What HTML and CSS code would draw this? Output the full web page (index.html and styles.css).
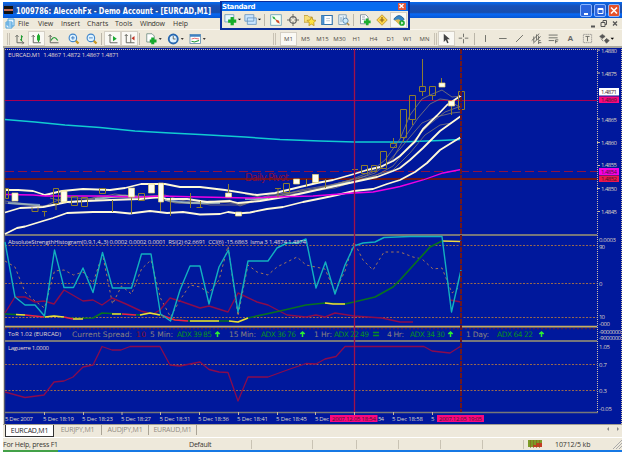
FILE: index.html
```html
<!DOCTYPE html>
<html lang="en">
<head>
<meta charset="utf-8">
<title>1009786: AleccohFx - Demo Account - [EURCAD,M1]</title>
<link rel="stylesheet" href="styles.css">
</head>
<body>
<div class="window">
  <header class="titlebar">
    <span class="app-icon"></span>
    <span class="title"><svg width="199" height="15"><text x="0" y="11" textLength="195" lengthAdjust="spacingAndGlyphs">1009786: AleccohFx - Demo Account - [EURCAD,M1]</text></svg></span>
    <span class="winbtn"><svg width="11" height="12"><path d="M3 9h4" stroke="#fff" stroke-width="2"/></svg></span>
    <span class="winbtn"><svg width="11" height="12"><path d="M3 3.500h5v5H3zM3 4.500h5" fill="none" stroke="#fff"/></svg></span>
    <span class="winbtn close"><svg width="11" height="12"><path d="M2 2.500l6 6m0-6l-6 6" stroke="#fff" stroke-width="1.600"/></svg></span>
  </header>
  <nav class="menubar">
    <svg class="doc-icon" width="10" height="11"><path d="M3 1h6v7H3zM1 4h6v6H1zM1 6h6" fill="#e6f5ff" stroke="#4aa0dc"/></svg>
    <span class="m1">File</span><span class="m2">View</span><span class="m3">Insert</span><span class="m4">Charts</span><span class="m5">Tools</span><span class="m6">Window</span><span class="m7">Help</span>
    <svg class="mdi" width="34" height="11"><g fill="none" stroke="#555"><path d="M3 8.500h4" stroke-width="2"/><path d="M13 4.500h4v4h-4zM15 4V2.500h3.500v4H17"/><path d="M25 3.500l4 4m0-4l-4 4" stroke-width="1.300"/></g></svg>
  </nav>
  <div class="toolbar">
    <i class="grip g1"></i>
    <span class="tool"><svg viewBox="0 0 16 16"><path d="M4 3v10h9M2 5l2-2 2 2M11 11l2 2-2 2" class="ink"/><path d="M10 3v8M8 9h2m0-4h2" class="green"/></svg></span>
    <span class="tool on"><svg viewBox="0 0 16 16"><path d="M3 3v10h10M1 5l2-2 2 2" class="ink"/><path d="M10 1v11" class="green"/><rect x="8" y="3" width="4" height="7" fill="#20b030"/></svg></span>
    <span class="tool"><svg viewBox="0 0 16 16"><path d="M3 3v10h11M1 5l2-2 2 2" class="ink"/><path d="M4 10q4-8 9 0" class="green"/></svg></span>
    <span class="tool wide zin"><svg viewBox="0 0 16 16"><path d="M10 10l4 4" stroke="#c99822" stroke-width="3"/><circle cx="6.500" cy="6.500" r="5" fill="#dff3ff" stroke="#3f86cc" stroke-width="1.500"/><path d="M4 6.500h5M6.500 4v5" stroke="#2467b5"/></svg></span>
    <span class="tool"><svg viewBox="0 0 16 16"><path d="M10 10l4 4" stroke="#c99822" stroke-width="3"/><circle cx="6.500" cy="6.500" r="5" fill="#dff3ff" stroke="#3f86cc" stroke-width="1.500"/><path d="M4 6.500h5" stroke="#2467b5"/></svg></span>
    <i class="sep"></i>
    <span class="tool on"><svg viewBox="0 0 16 16"><path d="M4 2v11h10M2 4l2-2 2 2" class="ink"/><path d="M8 4l5 3.500-5 3.500z" fill="#19a832"/></svg></span>
    <span class="tool on"><svg viewBox="0 0 16 16"><path d="M3 2v11h11M9 2v11M1 4l2-2 2 2" class="ink"/><path d="M14 4l-4 3 4 3z" fill="#c23020"/></svg></span>
    <i class="sep"></i>
    <span class="tool drop"><svg viewBox="0 0 22 16"><path d="M2 1h7l3 3v8H2z" fill="#fff" stroke="#628378"/><path d="M10 6v9M6 10.500h9" stroke="#15a82c" stroke-width="4"/><path d="M18 7h4l-2 2z"/></svg></span>
    <span class="tool drop"><svg viewBox="0 0 22 16"><circle cx="8" cy="8" r="6" fill="#dff2ff" stroke="#2868b0" stroke-width="2.500"/><path d="M8 4v4h3" class="ink"/><path d="M18 7h4l-2 2z"/></svg></span>
    <span class="tool drop"><svg viewBox="0 0 22 16"><rect x="1" y="2" width="14" height="12" fill="#fff" stroke="#5383ab"/><path d="M1 3.500h14" stroke="#4182c2" stroke-width="3"/><path d="M3 8l4-1 6 1" stroke="#d44" fill="none"/><path d="M3 11l4 1 6-2" class="green"/><path d="M18 7h4l-2 2z"/></svg></span>
    <i class="grip g2"></i>
    <span class="tf on">M1</span><span class="tf">M5</span><span class="tf">M15</span><span class="tf">M30</span><span class="tf">H1</span><span class="tf">H4</span><span class="tf">D1</span><span class="tf">W1</span><span class="tf">MN</span>
    <i class="grip g3"></i>
    <span class="draw on"><svg viewBox="0 0 16 16"><path d="M4 1v12l3-3 2 5 2-1-2-5h4z" fill="#444"/></svg></span>
    <span class="draw"><svg viewBox="0 0 16 16"><path d="M8 1v5m0 3v6M1 7.500h5m4 0h5" class="ink"/></svg></span>
    <i class="sep s2"></i>
    <span class="draw"><svg viewBox="0 0 16 16"><path d="M8 3v10" class="ink"/></svg></span>
    <span class="draw"><svg viewBox="0 0 16 16"><path d="M3 8h11" class="ink"/></svg></span>
    <span class="draw"><svg viewBox="0 0 16 16"><path d="M3 13L13 3" class="ink"/></svg></span>
    <span class="draw"><svg viewBox="0 0 16 16"><path d="M1 11L12 1M3 15L14 5M4 5v8M8 2v8M11 4v6M11 14h4m-4-3h3m-3 0v5" class="ink"/></svg></span>
    <span class="draw"><svg viewBox="0 0 16 16"><path d="M1 3h13M1 7h13M1 11h8M11 10v5m0-5h4m-4 2.500h3" class="ink"/></svg></span>
    <span class="draw letter">A</span>
    <span class="draw"><svg viewBox="0 0 16 16"><rect x="2" y="2" width="12" height="12" fill="none" stroke="#777" stroke-dasharray="2 1"/><path d="M5 5h6M8 5v7" class="ink"/></svg></span>
    <span class="draw last"><svg viewBox="0 0 22 16"><path d="M1 5l4-3 4 3-4 3zM8 11l3-3 4 3-4 4zM3 8l3 4" fill="#555" stroke="#555"/><path d="M17 7h5l-2.500 3z"/></svg></span>
  </div>

  <main class="chart">
  <svg width="619" height="376" viewBox="3 48 619 376">
    <rect x="3" y="48" width="619" height="376" fill="#00189c"/>
    <path d="M3.500 48v376" stroke="#dcd8ca"/><path d="M4.700 48v376" stroke="#666"/>
    <path d="M5 49.500H598M597.500 49V412M621.500 49V424" stroke="#d0bfa4" stroke-dasharray="1 1" fill="none"/>
    <path d="M5 235H597M5 341H597" stroke="#77777b" stroke-width="2.200"/>
    <path d="M5 412.500H598" stroke="#777" stroke-width="1.300"/>

    <g fill="none">
      <path d="M5 100.500H597" stroke="#a80052"/>
      <path d="M5 171.500H597" stroke="#8d1242" stroke-width="1.200" stroke-dasharray="9 4"/>
      <path d="M5 179H597" stroke="#6a1519" stroke-width="2"/>
      <path d="M5 119.500L35 122 65 125 100 127.500 135 131 170 133 200 134.500 245 137 280 139.500 320 141 355 142H400L440 140.500 461 139.500" class="cyan"/>
      <g class="ribbon">
        <path d="M5 201L25 204 45 207 60 203 85 200 100 196 130 198 155 196 170 202 200 203 230 200 240 206 265 197 300 193 330 187 355 181 375 176 393 166 405 151 418 136 430 124 445 112 461 106"/>
        <path d="M5 203L25 205 45 206 65 197 90 199 115 194 145 198 160 197 175 203 205 204 230 202 240 204 270 195 310 190 340 183 365 176 385 165 400 149 410 137 422 123 436 117 452 113 461 112"/>
        <path d="M50 198L70 203 100 198 150 196 165 195 180 200 210 205 240 205 265 199 290 193 325 187 350 180 370 172 385 160 400 139 410 115 422 99 430 95 442 90 452 97 461 96"/>
        <path d="M95 200L125 195 155 198 180 203 210 201 240 204 270 199 305 192 335 188 365 178 393 170 410 153 425 135 440 125 452 123"/>
        <path d="M245 194L270 199 300 190 330 185 357 179 375 173 392 160 405 137 418 118 430 104 440 99 448 100 461 108"/>
      </g>
      <path d="M95 199L120 196 145 197M165 200L190 203 220 203M245 199L268 199M325 188L350 182M8 203L40 205" stroke="#b8d9d3" stroke-width="2" opacity=".65"/>
      <g class="cream">
        <path d="M5 190H18L33 191 45 195 62 191 83 189 110 190 125 188 141 184H165L180 187 200 187 225 190 257 195 275 193 300 187 317 183 333 180 354 174 367 170 380 167 393 161 400 156 415 141.500 423 129 437 115.500 447 105 461 95.500"/>
        <path d="M5 212.500L20 208 43 207 53 205 67 202 87 201 110 200 140 199 160 197 167 199 187 199 207 202 230 201 238 203 260 201 290 196 317 190 354 182 377 177 393 171 400 168 410 160 423 148 440 131 461 116"/>
        <path d="M5 234L17 228 25 226.500 43 221 53 218 67 213 93 212 115 212 130 213.500 150 211 167 213 183 212 200 214.500 220 214 228 212 238 213.500 250 212.500 267 209 283 207 303 202 323 198 337 195 354 191 373 189 387 184 400 180 415 172 427 163 440 150 461 137"/>
      </g>
      <path d="M5 194.500L33 195 45 196H100L140 197 160 196 200 197 250 198 273 197 313 196 354 193 373 192 393 188 400 186.500 423 180 443 173 461 169.500" stroke="#ef00e5" stroke-width="1.300"/>
      <path d="M53.500 188.500h5v15h-5zM71.500 196.500h6v9h-6zM81.500 197.500h6v9h-6zM99.500 188.500h6v5h-6zM138.500 193.500h6v7h-6zM283.500 183.500h6v9h-6zM361.500 165.500h6v8h-6zM371.500 165.500h5v6h-5zM380.500 151.500h6v17h-6zM390.500 143.500h6v4h-6zM400.500 109.500h6v28h-6zM409.500 95.500h6v24h-6zM419.500 86.500h6v5h-6zM429.500 86.500h6v9h-6zM458.500 91.500h6v18h-6zM5.500 188.500h3v10h-3zM32 207.500v4h6v-4M56 203v7M42 211.500h5m-2.500 0v5M112.500 200v12M131.500 197v17M160.500 200v11M170.500 198v18M190.500 193v15M200.500 201v7M196.500 207.500h6M228.500 184v9M275 188.500h6m-3 0v9M306.500 179v8M325.500 179v9M352 169.500h6M412.500 120v5M422.500 59v28m0 4v5M432.500 96v4M441.500 78v5M451.500 106v9M393.500 138v5M403.500 138v4" stroke="#8c7d31"/>
      <path d="M12 193h6v8h-6zM61 191h6v11h-6zM128.500 188h6v9h-6zM148.500 184h6v9h-6zM158.500 183h5v19h-5zM225.500 193h6v4h-6zM235.500 212h6v4h-6zM293.500 179h6v5h-6zM312.500 174.500h6v8h-6zM439 83h6v4h-6zM448.500 101h6v5h-6z" fill="#fffef0" stroke="#e7d56c" stroke-width=".7"/>
    </g>
    <text x="245" y="180.500" textLength="44" class="pivot">Daily Pivot</text>

    <g fill="none" stroke="#99684d" stroke-dasharray="2 1.500">
      <path d="M5 245.500H597M5 283.500H597M5 317.500H597M5 364.500H597M5 390.500H597"/>
    </g>
    <path d="M5 326.700H597" stroke="#c7ae60" stroke-width="1.700"/><path d="M5 328.700H597" stroke="#731d20" stroke-dasharray="2 2"/>
    <g fill="none" stroke-linejoin="round">
      <path d="M5 261L15 267 25 292 35 301 44.500 308 54.500 271 64 270 73.500 275 83 272 93 283 102.500 254 112.500 304 121.500 286 131.500 294 141.500 269 151 260 160.500 298 170.500 317 180 300 190 285 200 287 209 293 219 280 228 246 238 316 248 265 257 272 268 275 277 267 297 257 306 265 325 269 335 292 345 271 354 242 363 260 373 270 384 252 400 252 413 257 422 259 433 269 442 268 452 293 461 286" stroke="#a37659" stroke-dasharray="2.500 3"/>
      <path d="M5 313L15 297 25 297 35 302 44 301 54 304 64 290 83 301 93 300 102 305 112 298 126 304 141 311 153 314 160 310 170 298 180 301 200 308 209 306 228 312 238 293 257 302 268 305 287 315 306 317 316 315 325 317 335 313 354 316 382 318 400 322H413M450 300L461 302" stroke="#8d0c4a" stroke-width="1.400"/>
      <path d="M5 314L25 315 44 317 54 316 75 318.500 93 318 102 313 120 314 140 315 150 313 160 315 175 320 190 321 228 321 238 322 248 318 280 311 306 305 325 303 345 304 354 302 375 297 393 287 400 280 420 258 430 247 442 241" stroke="#08721e" stroke-width="1.700"/>
      <path d="M16 314.500L25 315M45 317L54 316 64 317M73 319H83M112 314H121M140 315L150 313 160 315M190 321H219M229 321L238 322 248 318M325 303L333 304H345M442 241L461 241.500" stroke="#efd941" stroke-width="1.700"/>
      <path d="M25 315L44 317M64 317L73 319M122 314L136 315M161 315L175 320 188 321" stroke="#ee194d" stroke-width="1.600"/>
      <path d="M5 242L15 297 25 305 35 305 44.500 316 54.500 250 64 287.500H73.500L83 268 93 292.500 102.500 252.500 112.500 288H131.500L141.500 254H151L160.500 314 170.500 321 180 290 190 266H200L209 304 219 267 228.500 250 238 312 248 261H268L277 248 287 243H297L306 239 316 288 325.500 262 335 294 345 265 354 246 363 243 375 242 384 237.500 410 236.500H442L451.500 312 461 270" stroke="#12b0bf" stroke-width="1.400"/>
      <path d="M5 392L25 397.500 44 395 54 382 64 381 73 377 83 367 93 365 102 346.500 112 350H121L130 346.500H160L170 365 180 366 190 364 200 362 209 369.500 219 372 228 372.500 238 401 248 377H268L290 369 306 363.500 316 364 325 359 336 356.500 345 346.500H424L432 351 450 353 461 346" stroke="#8b0b4c" stroke-width="1.300"/>
      <path d="M354.500 49V412" stroke="#a0114b" stroke-width="1.300"/>
      <path d="M461 49V412" stroke="#6b1720" stroke-width="2" stroke-dasharray="5 1"/>
    </g>

    <g class="note">
      <text x="8" y="56.500" textLength="111">EURCAD,M1  1.4867 1.4872 1.4867 1.4871</text>
      <text x="8" y="244" textLength="298">AbsoluteStrengthHistogram(0,9,1,4,,3) 0.0002 0.0002 0.0001  RSI(2) 62.6691  CCI(6) -15.6863  lsma 3 1.4874 1.4874</text>
      <text x="8" y="336" textLength="53">ToR 1.02 (EURCAD)</text>
      <text x="8" y="350" textLength="41">Laguerre 1.0000</text>
    </g>
    <g class="tor">
      <g fill="#8b8380"><text x="72" y="336.500" textLength="60">Current Spread:</text><text x="150" y="336.500" textLength="23">5 Min:</text><text x="229" y="336.500" textLength="27">15 Min:</text><text x="314" y="336.500" textLength="18">1 Hr:</text><text x="387" y="336.500" textLength="17">4 Hr:</text><text x="466" y="336.500" textLength="23">1 Day:</text></g>
      <text x="136" y="336.500" textLength="10" fill="#8f1127">10</text>
      <g fill="#089022"><text x="177" y="336.500" textLength="35">ADX 39 85</text><text x="261" y="336.500" textLength="35">ADX 36 76</text><text x="334" y="336.500" textLength="35">ADX 22 49</text><text x="410" y="336.500" textLength="35">ADX 34 30</text><text x="497" y="336.500" textLength="36">ADX 64 22</text></g>
      <path d="M217.500 337v-5m-2.200 2l2.200-2 2.200 2M302.500 337v-5m-2.200 2l2.200-2 2.200 2M450.500 337v-5m-2.200 2l2.200-2 2.200 2M541.500 337v-5m-2.200 2l2.200-2 2.200 2" fill="none" stroke="#2cee32" stroke-width="1.500"/>
      <path d="M373 332.500h6M373 335.500h6" stroke="#089022" stroke-width="1.400"/>
    </g>

    <path d="M597 50h3M597 73h3M597 119h3M597 142.500h3M597 165.500h3M597 188.500h3M597 211.500h3M44.500 412v3M83.500 412v3M122 412v3M160.500 412v3M199.500 412v3M238.500 412v3M277.500 412v3M315.500 412v3M354.500 412v3M393.500 412v3M432.500 412v3" stroke="#c5b79e"/>
    <g class="scale">
      <text x="601" y="52.500" textLength="16">1.4880</text><text x="601" y="75.500" textLength="16">1.4875</text><text x="601" y="121.500" textLength="16">1.4865</text><text x="601" y="144.500" textLength="16">1.4860</text><text x="601" y="167" textLength="16">1.4855</text><text x="601" y="190.500" textLength="16">1.4850</text><text x="601" y="213.500" textLength="16">1.4845</text>
      <text x="599" y="242" textLength="17">0.0003</text><text x="599" y="248.500" textLength="6">90</text><text x="599" y="286">0</text><text x="599" y="319" textLength="6">10</text><text x="599" y="325.500" textLength="11">-000</text>
      <text x="599" y="333.500" textLength="22">-9000000</text><text x="599" y="340" textLength="22">-9000000</text><text x="599" y="349" textLength="11">1.05</text><text x="599" y="367" textLength="8">0.7</text><text x="599" y="393" textLength="8">0.3</text><text x="599" y="411" textLength="13">-0.05</text>
    </g>
    <rect x="599" y="88" width="20" height="7.500" fill="#fff"/><rect x="599" y="96.500" width="20" height="6.500" fill="#fa087e"/><rect x="599" y="168" width="20" height="7" fill="#f500e4"/><rect x="599" y="175.500" width="20" height="6.500" fill="#ed164e"/>
    <g class="tag"><text x="601" y="94" textLength="16">1.4871</text><text x="601" y="102" textLength="16">1.4869</text><text x="601" y="173.500" textLength="16">1.4854</text><text x="601" y="181" textLength="16">1.4852</text></g>
    <g class="scale">
      <text x="5" y="421" textLength="28">5 Dec 2007</text><text x="43" y="421" textLength="31">5 Dec 18:19</text><text x="82" y="421" textLength="31">5 Dec 18:23</text><text x="121" y="421" textLength="30">5 Dec 18:27</text><text x="159.500" y="421" textLength="31">5 Dec 18:31</text><text x="198" y="421" textLength="31">5 Dec 18:36</text><text x="237" y="421" textLength="31">5 Dec 18:41</text><text x="276" y="421" textLength="31">5 Dec 18:45</text><text x="315" y="421" textLength="14">5 Dec</text><text x="378" y="421" textLength="6">54</text><text x="392" y="421" textLength="31">5 Dec 18:58</text><text x="431" y="421">5</text>
    </g>
    <rect x="330" y="415" width="47.500" height="7" fill="#fa087e"/><rect x="437" y="415" width="47" height="7" fill="#fa087e"/>
    <g class="tag"><text x="332" y="421" textLength="44">2007.12.05 18:54</text><text x="439" y="421" textLength="43">2007.12.05 19:05</text></g>
  </svg>
  </main>

  <div class="tabs"><span class="tab active">EURCAD,M1</span><span class="tab">EURJPY,M1</span><span class="tab">AUDJPY,M1</span><span class="tab">EURAUD,M1</span><span class="arrows"><svg width="18" height="8"><path d="M5 2v4L3 4zM13 2v4l2-2z" fill="#888"/></svg></span></div>
  <footer class="status"><span class="help">For Help, press F1</span><span class="profile">Default</span><i></i><i></i><i></i><i></i><i></i><i></i><i></i><span class="traffic"><svg width="15" height="8"><path d="M0 0h14v7H0z" fill="#7d9a28"/><path d="M5 7V5h3V3h6v4z" fill="#c43d24"/><path d="M2.500 0v8M5.500 0v8M8.500 0v8M11.500 0v8" stroke="#8a5a20" stroke-width=".6"/></svg></span><span class="kb">10712/5 kb</span><svg class="resize" width="10" height="10"><path d="M1 10l9-9M4 10l6-6M7 10l3-3" stroke="#aaa"/></svg></footer>
  <div class="taskbar"><span></span></div>

  <aside class="floating">
    <div class="float-head"><span>Standard</span><b><svg width="7" height="6"><path d="M1.500 1l4 4m0-4l-4 4" stroke="#fff" stroke-width="1.300"/></svg></b></div>
    <div class="float-tools">
      <span class="f wide"><svg viewBox="0 0 22 16"><path d="M1 2h11v9H1z" fill="#e8f5ff" stroke="#6898bd"/><path d="M10 5v10M5 10h10" stroke="#17ad29" stroke-width="4"/><path d="M17 7h4l-2 2z"/></svg></span>
      <span class="f wide"><svg viewBox="0 0 22 16"><path d="M1 2h11v8H1zM4 6h11v8H4z" fill="#c9e5ff" stroke="#6593be"/><path d="M17 7h4l-2 2z"/></svg></span>
      <i class="sep"></i>
      <span class="f"><svg viewBox="0 0 16 16"><rect x="1" y="1" width="14" height="14" fill="#f5fff5" stroke="#5796b5"/><path d="M3 3l3 1 2 4-4-2z" fill="#2daf43"/><path d="M7 7l5 2 1 4-4-2z" fill="#d34d2c"/></svg></span>
      <span class="f"><svg viewBox="0 0 16 16"><circle cx="8" cy="8" r="4.500" fill="none" stroke="#666" stroke-width="1.500"/><path d="M8 0v6m0 4v6M0 8h6m4 0h6" class="ink"/></svg></span>
      <span class="f"><svg viewBox="0 0 16 16"><path d="M0 2h5l2 2h4v7H0z" fill="#f8df77" stroke="#bb9430"/><path d="M10 4l2 4 4 .5-3 3 .5 4-3.500-2-3.500 2 .5-4-3-3 4-.5z" fill="#ffe23e" stroke="#b78c20"/></svg></span>
      <span class="f"><svg viewBox="0 0 16 16"><path d="M1 2h14v12H1z" fill="#fff" stroke="#2e71ac" stroke-width="1.500"/><path d="M3 2v12" stroke="#3e88cb" stroke-width="3"/><path d="M7 6h5M7 9h5" stroke="#abc"/></svg></span>
      <span class="f"><svg viewBox="0 0 16 16"><path d="M1 1h10v13H1zM4 4v7m3-8v8" fill="#e8f4fb" stroke="#678dac"/><circle cx="10" cy="9" r="3.500" fill="#cae9fb" stroke="#4478a8"/><path d="M12 12l3 3" stroke="#a88644" stroke-width="2"/></svg></span>
      <i class="sep s3"></i>
      <span class="f"><svg viewBox="0 0 16 16"><path d="M2 1h7l3 3v9H2z" fill="#fff" stroke="#678"/><path d="M4 4h4M4 7h5" stroke="#789"/><path d="M11 6v9M6.500 10.500h9" stroke="#1eae30" stroke-width="3.500"/></svg></span>
      <span class="f"><svg viewBox="0 0 16 16"><path d="M8 1l7 7-7 7-7-7z" fill="#ffd64b" stroke="#b18624"/><path d="M8 4v7M5 8h6" stroke="#8b6115" stroke-width="1.500"/></svg></span>
      <span class="f on"><svg viewBox="0 0 16 16"><path d="M1 7q7-10 14 0l-7 5z" fill="#3585c6" stroke="#1e5b91"/><path d="M2 8l6 6 5-2-5-5z" fill="#e0bb53"/><circle cx="12" cy="12" r="3.800" fill="#1ea92d"/><path d="M11 10l3 2-3 2z" fill="#fff"/></svg></span>
    </div>
  </aside>
</div>
</body>
</html>
```

FILE: styles.css
```css
* { box-sizing: border-box; }
body { margin: 0; background: #fff; font: 7px/1 "Open Sans", "DejaVu Sans", sans-serif; color: #373530; overflow: hidden; }
svg { display: block; flex: none; }
.window { position: relative; width: 619px; height: 450px; margin: 2px 0 0 3px; background: #eee9db; display: flex; flex-direction: column; }
.titlebar { height: 16px; flex: none; display: flex; align-items: center; gap: 3px; padding-right: 2px; background: linear-gradient(#086cf0, #1851b8 25%, #174eae 65%, #0869f5 75%, #0757d2); }
.app-icon { width: 9px; height: 8px; background: linear-gradient(#111 35%, #c66b55 35% 58%, #111 58%); margin-left: 1px; }
.title { flex: none; margin-right: auto; }
.title svg { overflow: visible; }
.title text { font: bold 8.5px "DejaVu Sans Condensed", "DejaVu Sans", sans-serif; font-stretch: condensed; fill: #fff; }
.winbtn { width: 12px; height: 13px; border: 1px solid #8bb6ff; border-radius: 2px; background: #2b65dd; margin-right: -1px; }
.winbtn.close { background: #e4512b; margin: 0; }
.menubar { height: 12px; flex: none; display: flex; align-items: center; border-bottom: 1px solid #f9f6ed; }
.doc-icon { margin-left: 2px; width: 13px; }
.menubar span { white-space: nowrap; }
.m1 { width: 20px; } .m2 { width: 23px; } .m3 { width: 26px; } .m4 { width: 28px; } .m5 { width: 25px; } .m6 { width: 33px; letter-spacing: -.3px; } .m7 { width: 20px; }
.mdi { margin-left: auto; }
.toolbar { height: 18px; flex: none; display: flex; align-items: center; border-bottom: 2px solid #aaa79e; padding: 1px 2px 0 4px; }
.toolbar svg { height: 12px; width: 12px; }
.ink { fill: none; stroke: #666762; stroke-width: 1.3; }
.green { fill: none; stroke: #219a35; stroke-width: 1.5; }
.grip { width: 3px; height: 12px; border-left: 1px solid #c8c2b4; border-right: 1px solid #c8c2b4; flex: none; }
.g1 { margin-right: 1px; }
.g2 { margin: 0 4px 0 65px; }
.g3 { margin: 0 1px; }
.sep { width: 2px; height: 12px; border-left: 1px solid #bbb6a9; margin: 0 1px; flex: none; }
.tool { width: 17px; height: 15px; display: grid; place-items: center; flex: none; }
.tool.wide { width: 18px; }
.tool.zin { margin-left: 3px; }
.tool.drop { width: 22px; }
.toolbar .drop svg { width: 17px; }
.on { background: #faf9f4; border: 1px solid #d5d0c5; }
.tf { width: 17px; height: 14px; display: grid; place-items: center; font-size: 6px; flex: none; color: #4d4b45; }
.draw { width: 17px; height: 15px; display: grid; place-items: center; flex: none; }
.toolbar .draw svg { width: 11px; height: 11px; }
.letter { font: bold 8px "Liberation Sans", sans-serif; color: #666; }
.s2 { margin: 0 1px 0 2px; }
.draw.last { width: 20px; }
.toolbar .last svg { width: 15px; }
.chart { flex: none; height: 376px; }
.cyan { stroke: #11cbd0; stroke-width: 1.5; }
.ribbon { stroke: #837c76; stroke-width: .8; }
.cream { stroke: #fff9d9; stroke-width: 1.8; stroke-linejoin: round; }
.pivot { font: 10px "DejaVu Sans", sans-serif; fill: #850d42; }
.note text, .scale text, .tag text { font: 6px "Open Sans", "DejaVu Sans", sans-serif; white-space: pre; }
.note { fill: #e4dccf; }
.scale { fill: #ddd3c4; }
.tag { fill: #421a2b; }
.tor text { font: 7.5px "DejaVu Sans", sans-serif; }
.tabs { height: 13px; flex: none; display: flex; align-items: flex-start; background: #eee9dc; border-top: 1px solid #a39f93; padding-left: 2px; color: #918b82; }
.tab { width: 48px; height: 10px; border-right: 1px solid #aaa496; text-align: center; line-height: 10px; letter-spacing: -.2px; white-space: nowrap; }
.tab:nth-child(3) { width: 47px; }
.tab.active { width: 49px; height: 12px; line-height: 11px; background: #fff; border: 1px solid #333; border-top: 0; color: #24231f; }
.arrows { margin-left: auto; }
.status { height: 13px; flex: none; display: flex; align-items: center; border-top: 1px solid #fff; white-space: nowrap; }
.help { width: 186px; letter-spacing: -.2px; }
.profile { width: 25px; letter-spacing: -.2px; }
.status i { width: 42px; height: 9px; border-right: 1px solid #c9c3b4; flex: none; }
.status i:first-of-type { width: 38px; }
.status i:nth-of-type(2) { width: 61px; }
.status i:nth-of-type(3) { width: 44px; }
.status i:last-of-type { width: 41px; }
.traffic { margin-left: 4px; width: 27px; }
.kb { font-size: 7px; letter-spacing: -.1px; }
.resize { margin-left: auto; }
.taskbar { flex: 1; background: #1778e4; }
.taskbar span { display: block; width: 55px; height: 2px; background: #43a148; }
.floating { position: absolute; left: 217px; top: -1px; width: 190px; height: 29px; background: #0a2d9d; padding: 1px 2px 2px; }
.float-head { height: 9px; background: #086cf0; color: #fff; display: flex; justify-content: space-between; align-items: center; font: bold 7px/8px "DejaVu Sans", sans-serif; letter-spacing: -.4px; padding: 0 2px 0 0; }
.float-head b { width: 8px; height: 7px; background: #e2553a; }
.float-tools { height: 17px; background: #eee9db; display: flex; align-items: center; padding-left: 1px; }
.f { width: 17px; height: 16px; display: grid; place-items: center; flex: none; }
.f svg { width: 12px; height: 12px; }
.f.wide { width: 20px; }
.f.wide svg { width: 18px; height: 13px; }
.s3 { margin: 0 1px; }
```
